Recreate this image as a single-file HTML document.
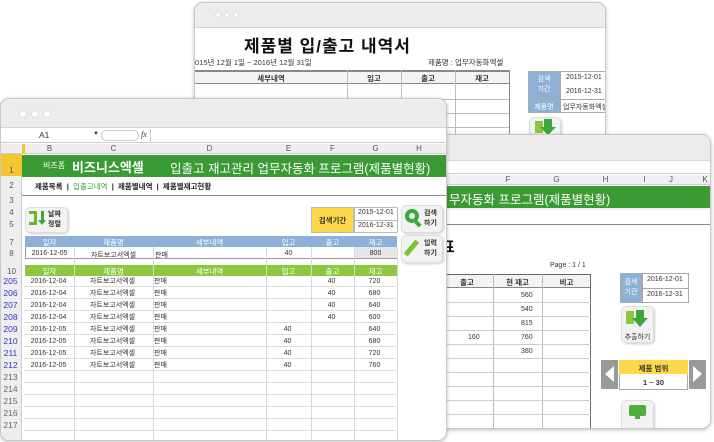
<!DOCTYPE html>
<html><head><meta charset="utf-8"><style>
*{margin:0;padding:0;box-sizing:border-box}
body{width:714px;height:442px;background:#fff;position:relative;overflow:hidden;font-family:"Liberation Sans","Noto Sans CJK KR",sans-serif;font-size:8px;color:#333}
.a{position:absolute;white-space:nowrap}
.win{position:absolute;background:#fff;border:1px solid #c8c8c8;border-radius:9px;overflow:hidden;box-shadow:0 1px 4px rgba(0,0,0,.25)}
.bar{position:absolute;left:0;right:0;top:0;background:#ececec;border-bottom:1px solid #d6d6d6}
.dot{position:absolute;width:7px;height:7px;border-radius:50%;background:#fff;border:1px solid #ddd}
.hl{position:absolute;height:1px;background:#d8d8d8}
.vl{position:absolute;width:1px;background:#d8d8d8}
.c{position:absolute;text-align:center;white-space:nowrap}
.btn{position:absolute;background:#f2f2f2;border:1px solid #ddd;border-radius:5px;box-shadow:1px 1px 2px rgba(0,0,0,.2)}
</style></head><body>

<div class="win" style="left:194px;top:2px;width:412px;height:200px">
 <div class="bar" style="height:25px"></div>
 <div class="dot" style="left:20px;top:9px;width:6px;height:6px"></div><div class="dot" style="left:29px;top:9px;width:6px;height:6px"></div><div class="dot" style="left:38px;top:9px;width:6px;height:6px"></div>
 <div class="a" style="left:49px;top:29px;font-size:17px;font-weight:bold;color:#111;letter-spacing:1px">제품별 입/출고 내역서</div>
 <div class="a" style="left:0;top:54px;font-size:7.5px">015년 12월 1일 ~ 2016년 12월 31일</div>
 <div class="a" style="left:233px;top:54px;font-size:7.5px">제품명 : 업무자동화엑셀</div>
 <div class="a" style="left:0;top:67px;width:314px;height:14px;background:#f3f3f3;border-top:2px solid #888;border-bottom:1px solid #888"></div>
 <div class="c" style="left:0;top:70px;width:152px;font-weight:bold;font-size:7.5px">세부내역</div>
 <div class="c" style="left:152px;top:70px;width:54px;font-weight:bold;font-size:7.5px">입고</div>
 <div class="c" style="left:206px;top:70px;width:54px;font-weight:bold;font-size:7.5px">출고</div>
 <div class="c" style="left:260px;top:70px;width:54px;font-weight:bold;font-size:7.5px">재고</div>
 <div class="vl" style="left:152px;top:67px;height:140px;background:#bbb"></div>
 <div class="vl" style="left:206px;top:67px;height:140px;background:#bbb"></div>
 <div class="vl" style="left:260px;top:67px;height:140px;background:#bbb"></div>
 <div class="vl" style="left:314px;top:67px;height:140px;background:#888"></div>
 <div class="hl" style="left:0;top:96px;width:314px;background:#bbb"></div>
 <div class="hl" style="left:0;top:110px;width:314px;background:#bbb"></div>
 <div class="hl" style="left:0;top:124px;width:314px;background:#bbb"></div>
 <div class="a" style="left:333px;top:68px;width:32px;height:42px;background:#8db0d8;border:1px solid #aaa"></div>
 <div class="c" style="left:333px;top:72px;width:32px;color:#fff;font-size:7px;line-height:10px">검색<br>기간</div>
 <div class="a" style="left:333px;top:96px;width:32px;height:14px;background:#8db0d8;border:1px solid #aaa"></div>
 <div class="c" style="left:333px;top:99px;width:32px;color:#fff;font-size:7px">제품명</div>
 <div class="a" style="left:365px;top:68px;width:50px;height:42px;border:1px solid #aaa"></div>
 <div class="a" style="left:371px;top:71px;font-size:7px">2015-12-01</div>
 <div class="a" style="left:371px;top:85px;font-size:7px">2016-12-31</div>
 <div class="a" style="left:365px;top:96px;width:50px;height:1px;background:#aaa"></div>
 <div class="a" style="left:368px;top:99px;font-size:7px">업무자동화엑셀</div>
 <div class="btn" style="left:334px;top:114px;width:32px;height:30px"></div>
 <div class="a" style="left:340px;top:118px;width:8px;height:12px;background:#8dc63f"></div>
 <div class="a" style="left:349px;top:116px;width:8px;height:8px;background:#3aa83a"></div>
 <div class="a" style="left:345px;top:124px;width:0;height:0;border-left:8px solid transparent;border-right:8px solid transparent;border-top:8px solid #3aa83a"></div>
</div>

<div class="win" style="left:380px;top:134px;width:331px;height:295px">
 <div class="bar" style="height:26px"></div>
 <div class="a" style="left:0;top:38px;width:331px;height:1px;background:#ccc"></div>
 <div class="a" style="left:0;top:40px;width:331px;height:10px;background:#f0f0f0;border-bottom:1px solid #ccc"></div>
 <div class="c" style="left:103px;top:40px;width:48px;font-size:8px;color:#555">F</div>
 <div class="c" style="left:151px;top:40px;width:49px;font-size:8px;color:#555">G</div>
 <div class="c" style="left:200px;top:40px;width:49px;font-size:8px;color:#555">H</div>
 <div class="c" style="left:249px;top:40px;width:29px;font-size:8px;color:#555">I</div>
 <div class="c" style="left:278px;top:40px;width:24px;font-size:8px;color:#555">J</div>
 <div class="c" style="left:302px;top:40px;width:44px;font-size:8px;color:#555">K</div>
 <div class="a" style="left:0;top:51px;width:331px;height:22px;background:#3a9a33"></div>
 <div class="a" style="left:68px;top:54px;font-size:12.5px;color:#fff">무자동화 프로그램(제품별현황)</div>
 <div class="a" style="left:0;top:73px;width:331px;height:2px;background:#eef6ea"></div>
 <div class="a" style="left:0;top:89px;width:331px;height:1px;background:#888"></div>
 <div class="a" style="left:60px;top:101px;font-size:15px;font-weight:bold;color:#111">표</div>
 <div class="a" style="left:169px;top:127px;font-size:7px">Page : 1 / 1</div>
 <div class="a" style="left:60px;top:139px;width:150px;height:14px;background:#f3f3f3;border-top:1px solid #666;border-bottom:1px solid #888"></div>
 <div class="c" style="left:60px;top:142px;width:52px;font-weight:bold;font-size:7.5px">출고</div>
 <div class="c" style="left:112px;top:142px;width:49px;font-weight:bold;font-size:7.5px">현 재고</div>
 <div class="c" style="left:161px;top:142px;width:49px;font-weight:bold;font-size:7.5px">비고</div>
 <div class="vl" style="left:112px;top:139px;height:160px;background:#bbb"></div>
 <div class="vl" style="left:161px;top:139px;height:160px;background:#bbb"></div>
 <div class="vl" style="left:209px;top:139px;height:160px;background:#666"></div>
 <div class="hl" style="left:60px;top:167px;width:150px;background:#ccc"></div>
 <div class="hl" style="left:60px;top:181px;width:150px;background:#ccc"></div>
 <div class="hl" style="left:60px;top:195px;width:150px;background:#ccc"></div>
 <div class="hl" style="left:60px;top:209px;width:150px;background:#ccc"></div>
 <div class="hl" style="left:60px;top:223px;width:150px;background:#ccc"></div>
 <div class="hl" style="left:60px;top:237px;width:150px;background:#ccc"></div>
 <div class="hl" style="left:60px;top:251px;width:150px;background:#ccc"></div>
 <div class="hl" style="left:60px;top:265px;width:150px;background:#ccc"></div>
 <div class="hl" style="left:60px;top:279px;width:150px;background:#ccc"></div>
 <div class="a" style="left:140px;top:157px;font-size:7px">560</div>
 <div class="a" style="left:140px;top:171px;font-size:7px">540</div>
 <div class="a" style="left:140px;top:185px;font-size:7px">815</div>
 <div class="a" style="left:87px;top:199px;font-size:7px">160</div>
 <div class="a" style="left:140px;top:199px;font-size:7px">760</div>
 <div class="a" style="left:140px;top:213px;font-size:7px">380</div>
 <div class="a" style="left:239px;top:138px;width:22px;height:30px;background:#8db0d8;border:1px solid #aaa"></div>
 <div class="c" style="left:239px;top:143px;width:22px;color:#fff;font-size:7px;line-height:10px">검색<br>기간</div>
 <div class="a" style="left:261px;top:138px;width:47px;height:30px;border:1px solid #aaa"></div>
 <div class="a" style="left:261px;top:153px;width:47px;height:1px;background:#aaa"></div>
 <div class="a" style="left:266px;top:141px;font-size:7px">2016-12-01</div>
 <div class="a" style="left:266px;top:156px;font-size:7px">2016-12-31</div>
 <div class="btn" style="left:240px;top:171px;width:33px;height:37px"></div>
 <div class="a" style="left:245px;top:176px;width:8px;height:13px;background:#8dc63f"></div>
 <div class="a" style="left:255px;top:175px;width:8px;height:8px;background:#3aa83a"></div>
 <div class="a" style="left:251px;top:183px;width:0;height:0;border-left:8px solid transparent;border-right:8px solid transparent;border-top:9px solid #3aa83a"></div>
 <div class="c" style="left:240px;top:197px;width:33px;font-size:7px">추출하기</div>
 <div class="a" style="left:220px;top:225px;width:17px;height:29px;background:#999"></div>
 <div class="a" style="left:224px;top:231px;width:0;height:0;border-top:8px solid transparent;border-bottom:8px solid transparent;border-right:9px solid #fff"></div>
 <div class="a" style="left:238px;top:225px;width:69px;height:30px;border:1px solid #aaa"></div>
 <div class="a" style="left:238px;top:225px;width:69px;height:14px;background:#ffd84a"></div>
 <div class="c" style="left:238px;top:228px;width:69px;font-size:7.5px;font-weight:bold">제품 범위</div>
 <div class="c" style="left:238px;top:243px;width:69px;font-size:7.5px;font-weight:bold">1 ~ 30</div>
 <div class="a" style="left:308px;top:225px;width:17px;height:29px;background:#999"></div>
 <div class="a" style="left:312px;top:231px;width:0;height:0;border-top:8px solid transparent;border-bottom:8px solid transparent;border-left:9px solid #fff"></div>
 <div class="btn" style="left:240px;top:265px;width:33px;height:36px"></div>
 <div class="a" style="left:248px;top:270px;width:17px;height:11px;background:#4caf3a;border-radius:2px"></div>
 <div class="a" style="left:254px;top:281px;width:5px;height:3px;background:#4caf3a"></div>
</div>

<div class="win" style="left:0;top:98px;width:447px;height:343px">
 <div class="bar" style="height:29px"></div>
 <div class="dot" style="left:18px;top:11px;width:8px;height:8px"></div><div class="dot" style="left:30px;top:11px;width:8px;height:8px"></div><div class="dot" style="left:42px;top:11px;width:8px;height:8px"></div>
 <div class="a" style="left:0;top:30px;width:447px;height:14px;border-bottom:1px solid #ccc"></div>
 <div class="a" style="left:38px;top:31px;font-size:8.5px">A1</div>
 <div class="a" style="left:92px;top:32px;font-size:6px">▼</div>
 <div class="a" style="left:100px;top:31px;width:38px;height:11px;border:1px solid #ccc;border-radius:6px"></div>
 <div class="a" style="left:140px;top:31px;font-size:8px;font-style:italic;font-family:'Liberation Serif',serif">fx</div>
 <div class="vl" style="left:149px;top:30px;height:14px;background:#ccc"></div>
 <div class="a" style="left:0;top:45px;width:447px;height:10px;background:#eeeeee;border-bottom:1px solid #ccc"></div>
 <div class="a" style="left:21px;top:45px;width:3px;height:10px;background:#f5c431"></div>
 <div class="c" style="left:24px;top:45px;width:49px;font-size:8px;color:#555">B</div>
 <div class="c" style="left:73px;top:45px;width:79px;font-size:8px;color:#555">C</div>
 <div class="c" style="left:152px;top:45px;width:113px;font-size:8px;color:#555">D</div>
 <div class="c" style="left:265px;top:45px;width:45px;font-size:8px;color:#555">E</div>
 <div class="c" style="left:310px;top:45px;width:43px;font-size:8px;color:#555">F</div>
 <div class="c" style="left:353px;top:45px;width:43px;font-size:8px;color:#555">G</div>
 <div class="c" style="left:396px;top:45px;width:44px;font-size:8px;color:#555">H</div>
 <div class="a" style="left:0;top:55px;width:21px;height:290px;background:#eeeeee;border-right:1px solid #ccc"></div>
 <div class="a" style="left:0;top:55px;width:21px;height:22px;background:#f5c431"></div>
 <div class="c" style="left:0;top:67px;width:21px;font-size:8px;color:#555">1</div>
 <div class="c" style="left:0;top:82px;width:21px;font-size:8px;color:#555">2</div>
 <div class="c" style="left:0;top:97px;width:21px;font-size:8px;color:#555">3</div>
 <div class="c" style="left:0;top:109px;width:21px;font-size:8px;color:#555">4</div>
 <div class="c" style="left:0;top:121px;width:21px;font-size:8px;color:#555">5</div>
 <div class="c" style="left:0;top:139px;width:21px;font-size:8px;color:#555">7</div>
 <div class="c" style="left:0;top:150px;width:21px;font-size:8px;color:#555">8</div>
 <div class="c" style="left:0;top:168px;width:21px;font-size:8px;color:#555">10</div>
 <div class="a" style="left:21px;top:56px;width:426px;height:22px;background:#3a9a33"></div>
 <div class="a" style="left:42px;top:61px;font-size:8px;color:#fff">비즈폼</div>
 <div class="a" style="left:71px;top:58px;font-size:13px;color:#fff;font-weight:bold">비즈니스엑셀</div>
 <div class="a" style="left:169px;top:59px;font-size:12.5px;color:#fff">입출고 재고관리 업무자동화 프로그램(제품별현황)</div>
 <div class="a" style="left:34px;top:82px;font-size:7.5px;font-weight:bold;color:#222">제품목록 &nbsp;| &nbsp;<span style="color:#3a9a33;font-weight:normal">입출고내역</span> &nbsp;| &nbsp;제품별내역 &nbsp;| &nbsp;제품별재고현황</div>
 <div class="a" style="left:21px;top:96px;width:426px;height:1px;background:#888"></div>
 <div class="btn" style="left:24px;top:108px;width:43px;height:26px"></div>
 <div class="a" style="left:28px;top:112px;width:8px;height:14px;border:3px solid #6bb82c;border-left:none"></div>
 <div class="a" style="left:40px;top:112px;width:3px;height:9px;background:#3aa83a"></div>
 <div class="a" style="left:37px;top:121px;width:0;height:0;border-left:4px solid transparent;border-right:4px solid transparent;border-top:5px solid #3aa83a"></div>
 <div class="a" style="left:47px;top:111px;font-size:7px;font-weight:bold;line-height:10px">날짜<br>정렬</div>
 <div class="a" style="left:310px;top:108px;width:43px;height:26px;background:#ffd84a;border:1px solid #bbb"></div>
 <div class="c" style="left:310px;top:116px;width:43px;font-size:7.5px;font-weight:bold">검색기간</div>
 <div class="a" style="left:353px;top:108px;width:44px;height:26px;border:1px solid #bbb"></div>
 <div class="a" style="left:353px;top:121px;width:44px;height:1px;background:#bbb"></div>
 <div class="a" style="left:357px;top:110px;font-size:7px">2015-12-01</div>
 <div class="a" style="left:357px;top:123px;font-size:7px">2016-12-31</div>
 <div class="btn" style="left:400px;top:106px;width:42px;height:28px"></div>
 <div class="a" style="left:404px;top:110px;width:14px;height:14px;border:4px solid #3aa83a;border-radius:50%"></div>
 <div class="a" style="left:415px;top:122px;width:4px;height:6px;background:#3aa83a;transform:rotate(-45deg)"></div>
 <div class="a" style="left:423px;top:110px;font-size:7px;font-weight:bold;line-height:10px">검색<br>하기</div>
 <div class="btn" style="left:400px;top:136px;width:42px;height:28px"></div>
 <div class="a" style="left:408px;top:140px;width:5px;height:18px;background:#7cc22e;transform:rotate(40deg);border-radius:1px"></div>
 <div class="a" style="left:423px;top:140px;font-size:7px;font-weight:bold;line-height:10px">입력<br>하기</div>
 <div class="a" style="left:24px;top:137px;width:372px;height:11px;background:#8db0d8"></div>
 <div class="c" style="left:24px;top:138px;width:49px;color:#fff;font-size:7.5px">일자</div>
 <div class="c" style="left:73px;top:138px;width:79px;color:#fff;font-size:7.5px">제품명</div>
 <div class="c" style="left:152px;top:138px;width:113px;color:#fff;font-size:7.5px">세부내역</div>
 <div class="c" style="left:265px;top:138px;width:45px;color:#fff;font-size:7.5px">입고</div>
 <div class="c" style="left:310px;top:138px;width:43px;color:#fff;font-size:7.5px">출고</div>
 <div class="c" style="left:353px;top:138px;width:43px;color:#fff;font-size:7.5px">재고</div>
 <div class="a" style="left:24px;top:148px;width:372px;height:12px;border:1px solid #999;border-top:none"></div>
 <div class="a" style="left:353px;top:148px;width:43px;height:11px;background:#e6e6e6"></div>
 <div class="c" style="left:24px;top:151px;width:49px;font-size:7px">2016-12-05</div>
 <div class="c" style="left:73px;top:151px;width:79px;font-size:7px">자트보고서엑셀</div>
 <div class="a" style="left:154px;top:151px;font-size:7px">판매</div>
 <div class="c" style="left:265px;top:151px;width:45px;font-size:7px">40</div>
 <div class="c" style="left:353px;top:151px;width:43px;font-size:7px">800</div>
 <div class="a" style="left:24px;top:166px;width:372px;height:11px;background:#8dc63f"></div>
 <div class="c" style="left:24px;top:167px;width:49px;color:#fff;font-size:7.5px">일자</div>
 <div class="c" style="left:73px;top:167px;width:79px;color:#fff;font-size:7.5px">제품명</div>
 <div class="c" style="left:152px;top:167px;width:113px;color:#fff;font-size:7.5px">세부내역</div>
 <div class="c" style="left:265px;top:167px;width:45px;color:#fff;font-size:7.5px">입고</div>
 <div class="c" style="left:310px;top:167px;width:43px;color:#fff;font-size:7.5px">출고</div>
 <div class="c" style="left:353px;top:167px;width:43px;color:#fff;font-size:7.5px">재고</div>
 <div class="vl" style="left:73px;top:148px;height:200px"></div>
 <div class="vl" style="left:152px;top:148px;height:200px"></div>
 <div class="vl" style="left:265px;top:148px;height:200px"></div>
 <div class="vl" style="left:310px;top:148px;height:200px"></div>
 <div class="vl" style="left:353px;top:148px;height:200px"></div>
 <div class="vl" style="left:396px;top:148px;height:200px"></div>
</div>
<div class="a" style="left:0;top:275px;width:447px;height:166px">
 <div class="a" style="left:24px;top:11px;width:372px;height:1px;background:#ddd"></div>
 <div class="a" style="left:24px;top:23px;width:372px;height:1px;background:#ddd"></div>
 <div class="a" style="left:24px;top:35px;width:372px;height:1px;background:#ddd"></div>
 <div class="a" style="left:24px;top:47px;width:372px;height:1px;background:#ddd"></div>
 <div class="a" style="left:24px;top:59px;width:372px;height:1px;background:#ddd"></div>
 <div class="a" style="left:24px;top:71px;width:372px;height:1px;background:#ddd"></div>
 <div class="a" style="left:24px;top:83px;width:372px;height:1px;background:#ddd"></div>
 <div class="a" style="left:24px;top:95px;width:372px;height:1px;background:#ddd"></div>
 <div class="a" style="left:24px;top:107px;width:372px;height:1px;background:#ddd"></div>
 <div class="a" style="left:24px;top:119px;width:372px;height:1px;background:#ddd"></div>
 <div class="a" style="left:24px;top:131px;width:372px;height:1px;background:#ddd"></div>
 <div class="a" style="left:24px;top:143px;width:372px;height:1px;background:#ddd"></div>
 <div class="a" style="left:24px;top:155px;width:372px;height:1px;background:#ddd"></div>
 <div class="a" style="left:0;top:0;width:21px;font-size:8.5px;line-height:12px;text-align:center;color:#33c">205<br>206<br>207<br>208<br>209<br>210<br>211<br>212<br><span style="color:#666">213<br>214<br>215<br>216<br>217</span></div>
 <div class="a" style="left:24px;top:1px;width:49px;font-size:7px;line-height:12px;text-align:center">2016-12-04<br>2016-12-04<br>2016-12-04<br>2016-12-04<br>2016-12-05<br>2016-12-05<br>2016-12-05<br>2016-12-05</div>
 <div class="a" style="left:73px;top:1px;width:79px;font-size:7px;line-height:12px;text-align:center">자트보고서엑셀<br>자트보고서엑셀<br>자트보고서엑셀<br>자트보고서엑셀<br>자트보고서엑셀<br>자트보고서엑셀<br>자트보고서엑셀<br>자트보고서엑셀</div>
 <div class="a" style="left:154px;top:1px;font-size:7px;line-height:12px">판매<br>판매<br>판매<br>판매<br>판매<br>판매<br>판매<br>판매</div>
 <div class="a" style="left:265px;top:49px;width:45px;font-size:7px;line-height:12px;text-align:center">40<br>40<br>40<br>40</div>
 <div class="a" style="left:310px;top:1px;width:43px;font-size:7px;line-height:12px;text-align:center">40<br>40<br>40<br>40</div>
 <div class="a" style="left:353px;top:1px;width:43px;font-size:7px;line-height:12px;text-align:center">720<br>680<br>640<br>600<br>640<br>680<br>720<br>760</div>
</div>
</body></html>
